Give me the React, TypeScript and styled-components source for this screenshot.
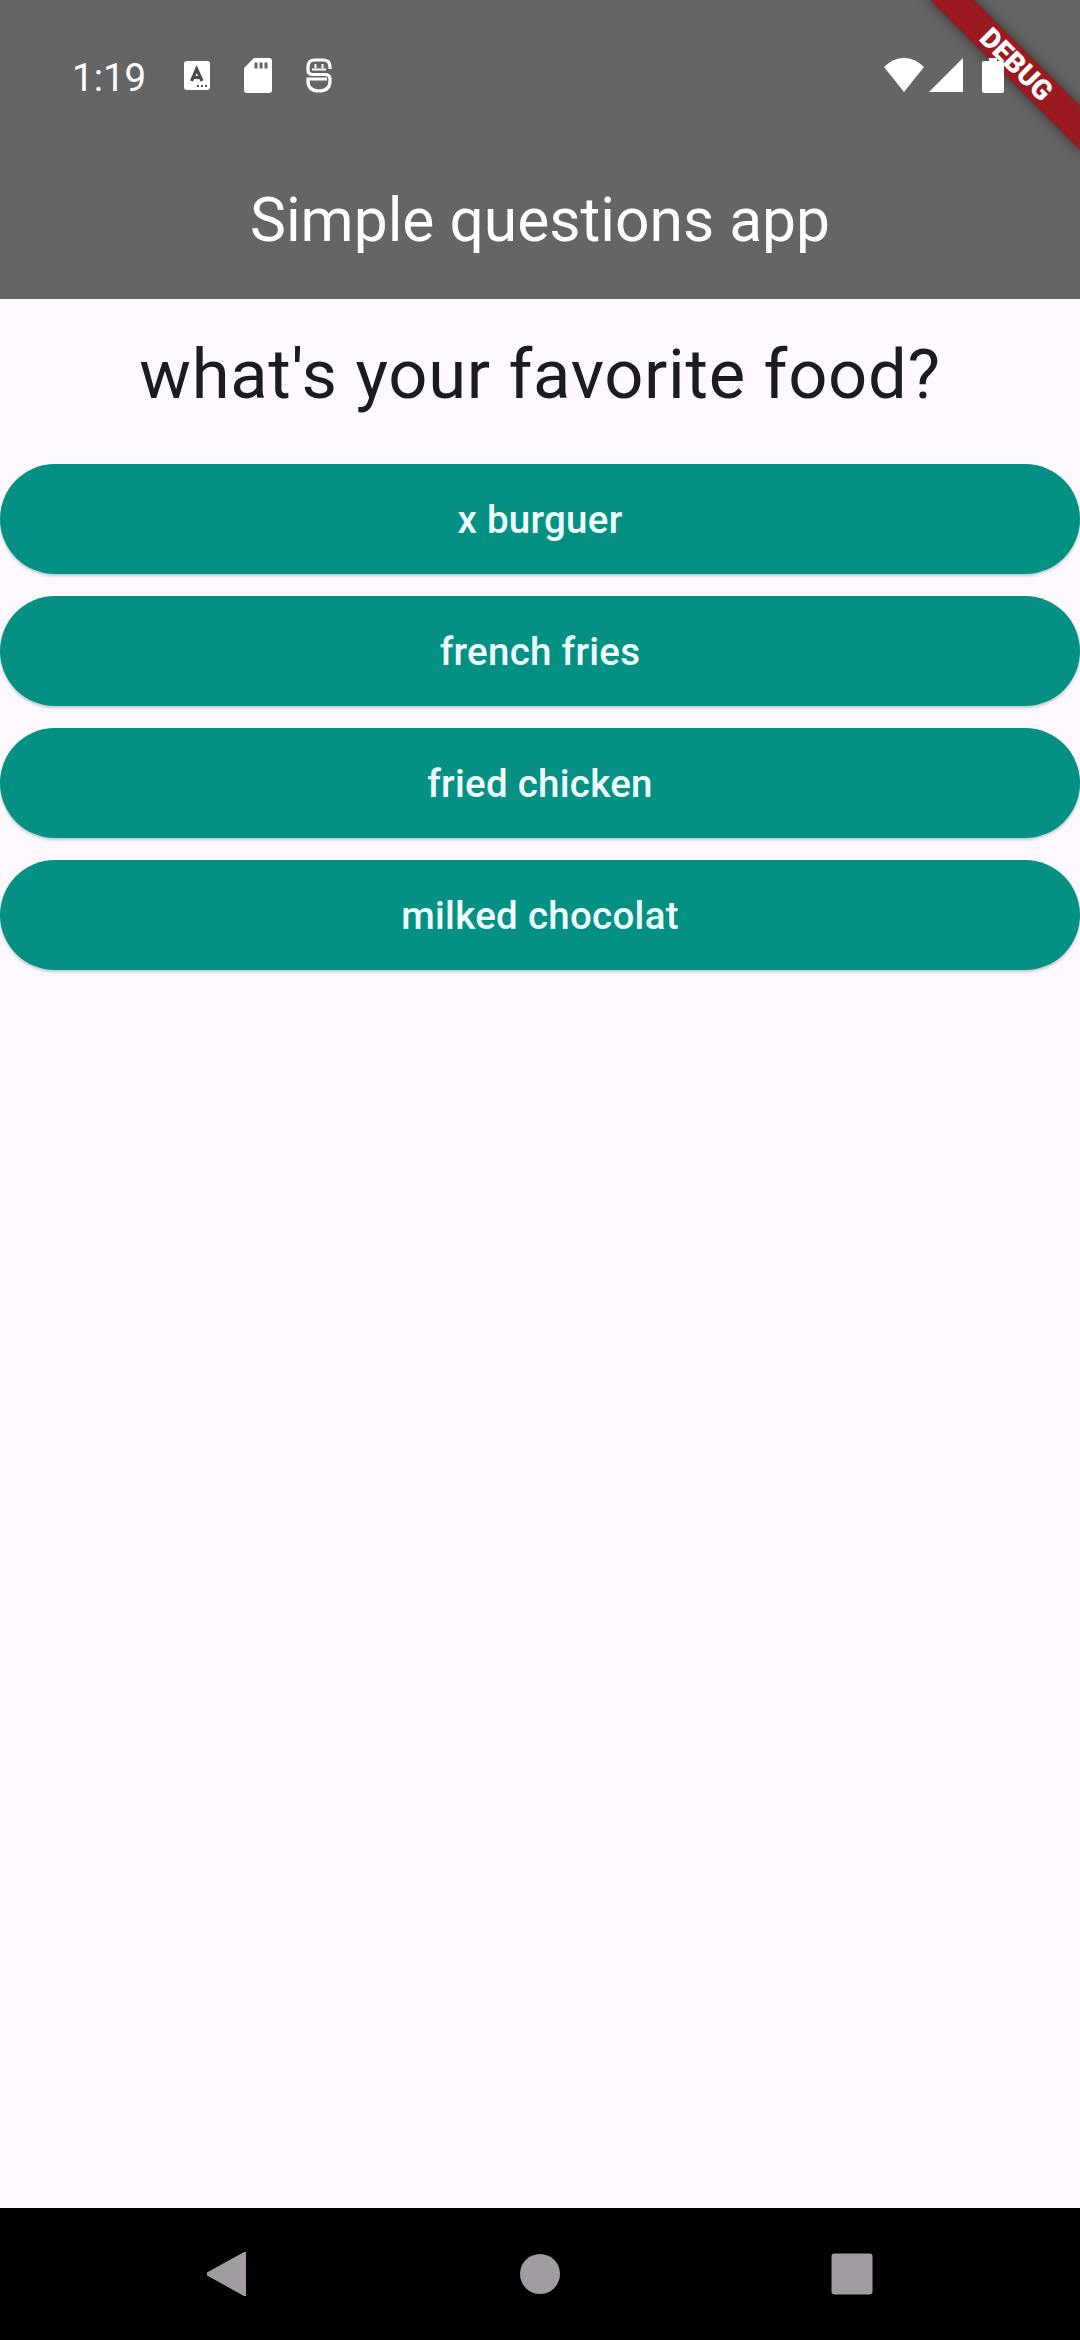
import React from "react";
import styled, { createGlobalStyle } from "styled-components";

const GlobalStyle = createGlobalStyle`
  *, *::before, *::after { box-sizing: border-box; }
  body { margin: 0; font-family: Roboto, "Noto Sans", sans-serif; }
`;

const Screen = styled.main`
  position: relative;
  display: flex;
  flex-direction: column;
  width: 1080px;
  height: 2340px;
  overflow: hidden;
  background: #fdf9ff;
`;

const Header = styled.header`
  display: flex;
  flex-direction: column;
  height: 299px;
  background: #656565;
`;

const StatusBar = styled.div`
  display: flex;
  align-items: center;
  justify-content: space-between;
  height: 145px;
  padding: 5px 76px 0 72px;
  color: #fff;
`;

const StatusGroup = styled.div<{ $gap: number }>`
  position: relative;
  z-index: 2;
  display: flex;
  align-items: center;
  gap: ${({ $gap }) => $gap}px;

  svg { display: block; }
`;

const Clock = styled.span`
  width: 73px;
  margin-right: 5px;
  padding-top: 5px;
  font-size: 38.5px;
  line-height: 46px;
  white-space: nowrap;
`;

const BatterySlot = styled.span`
  padding-left: 14px;
`;

const AppTitle = styled.h1`
  margin: 0;
  height: 154px;
  color: #fff;
  font-size: 60.5px;
  font-weight: 400;
  line-height: 151px;
  text-align: center;
`;

const Content = styled.section`
  display: flex;
  flex: 1;
  flex-direction: column;
`;

const Question = styled.h2`
  margin: 0;
  height: 165px;
  color: #1c1b1f;
  font-size: 68.75px;
  font-weight: 400;
  letter-spacing: 0.7px;
  line-height: 151px;
  text-align: center;
`;

const Answers = styled.div`
  display: flex;
  flex-direction: column;
  gap: 22px;
`;

const AnswerButton = styled.button`
  height: 110px;
  padding: 1px 0 0;
  border: 0;
  border-radius: 55px;
  background: #049184;
  box-shadow: 0 2px 3px rgba(0, 60, 70, 0.25);
  color: #f0ffff;
  font-family: inherit;
  font-size: 38.5px;
  font-weight: 500;
  letter-spacing: 0.275px;
  line-height: 109px;
`;

const NavBar = styled.nav`
  display: flex;
  align-items: center;
  justify-content: space-around;
  height: 132px;
  padding: 0 72px;
  background: #000;
`;

const NavIcon = styled.svg`
  display: block;
  width: 44px;
  height: 44px;
  fill: #a09ca2;
`;

const Ribbon = styled.div`
  position: absolute;
  top: 0;
  right: 0;
  z-index: 1;
  width: 220px;
  height: 220px;
  overflow: hidden;
`;

const RibbonBand = styled.div`
  position: absolute;
  top: 75px;
  left: 110px;
  width: 220px;
  height: 31px;
  padding-left: 1px;
  transform: rotate(45deg);
  transform-origin: 110px -75px;
  background: #991b20;
  box-shadow: 0 0 14px rgba(0, 0, 0, 0.5);
  color: #fff;
  font-size: 28px;
  font-weight: 900;
  line-height: 31px;
  text-align: center;
`;

const answers = ["x burguer", "french fries", "fried chicken", "milked chocolat"];

const KeyboardIcon = () => (
  <svg width="26" height="29" viewBox="0 0 26 29">
    <rect width="26" height="29" rx="3" fill="#fff" />
    <path d="M7.500 20 12.700 8 18 20M9.500 16.500h6.500" fill="none" stroke="#4c4c4c" strokeWidth="3.2" />
    <path d="M13 25h2m2 0h2m2 0h2" stroke="#555" strokeWidth="2" />
  </svg>
);

const SdCardIcon = () => (
  <svg width="28" height="35" viewBox="0 0 28 35">
    <path d="M10 0h15q3 0 3 3v29q0 3-3 3H3q-3 0-3-3V10Z" fill="#fff" />
    <path d="M12 4.500v6M17 4.500v6M22 4.500v6" stroke="#656565" strokeWidth="3" />
  </svg>
);

const ServiceIcon = () => (
  <svg width="26" height="35" viewBox="0 0 26 35" fill="none" stroke="#fff" strokeWidth="3.2">
    <path d="M24 11V9Q24 2 17 2H9Q2 2 2 9v3q0 4.500 5 4.500h12q5 0 5 4.500v2q0 10-11 10Q2 33 2 23v-2h19" />
    <path d="M6 11.500h14" strokeWidth="2" />
    <path d="M9.500 6v4M16.500 6v4" strokeWidth="2" />
  </svg>
);

const WifiIcon = () => (
  <svg width="40" height="34" viewBox="0 0 40 34">
    <path d="M0 9Q9 0 20 0t20 9L20 34Z" fill="#fff" />
  </svg>
);

const SignalIcon = () => (
  <svg width="34" height="34" viewBox="0 0 34 34">
    <path d="M34 0v34H0Z" fill="#fff" />
  </svg>
);

const BatteryIcon = () => (
  <svg width="22" height="35" viewBox="0 0 22 35">
    <path d="M7 0h8v3h5q2 0 2 2v28q0 2-2 2H2q-2 0-2-2V5q0-2 2-2h5Z" fill="#fff" />
  </svg>
);

export default function App() {
  return (
    <>
      <GlobalStyle />
      <Screen>
        <Header>
          <StatusBar>
            <StatusGroup $gap={34}>
              <Clock>1:19</Clock>
              <KeyboardIcon />
              <SdCardIcon />
              <ServiceIcon />
            </StatusGroup>
            <StatusGroup $gap={5}>
              <WifiIcon />
              <SignalIcon />
              <BatterySlot>
                <BatteryIcon />
              </BatterySlot>
            </StatusGroup>
          </StatusBar>
          <AppTitle>Simple questions app</AppTitle>
        </Header>
        <Content>
          <Question>what's your favorite food?</Question>
          <Answers>
            {answers.map((answer) => (
              <AnswerButton key={answer}>{answer}</AnswerButton>
            ))}
          </Answers>
        </Content>
        <NavBar>
          <NavIcon viewBox="0 0 44 44">
            <path d="M40 0v44h-2L1 23.500v-3L38 0Z" />
          </NavIcon>
          <NavIcon viewBox="0 0 44 44">
            <circle cx="22" cy="22" r="20" />
          </NavIcon>
          <NavIcon viewBox="0 0 44 44">
            <rect x="1.500" y="1.500" width="41" height="41" rx="3" />
          </NavIcon>
        </NavBar>
        <Ribbon>
          <RibbonBand>DEBUG</RibbonBand>
        </Ribbon>
      </Screen>
    </>
  );
}
